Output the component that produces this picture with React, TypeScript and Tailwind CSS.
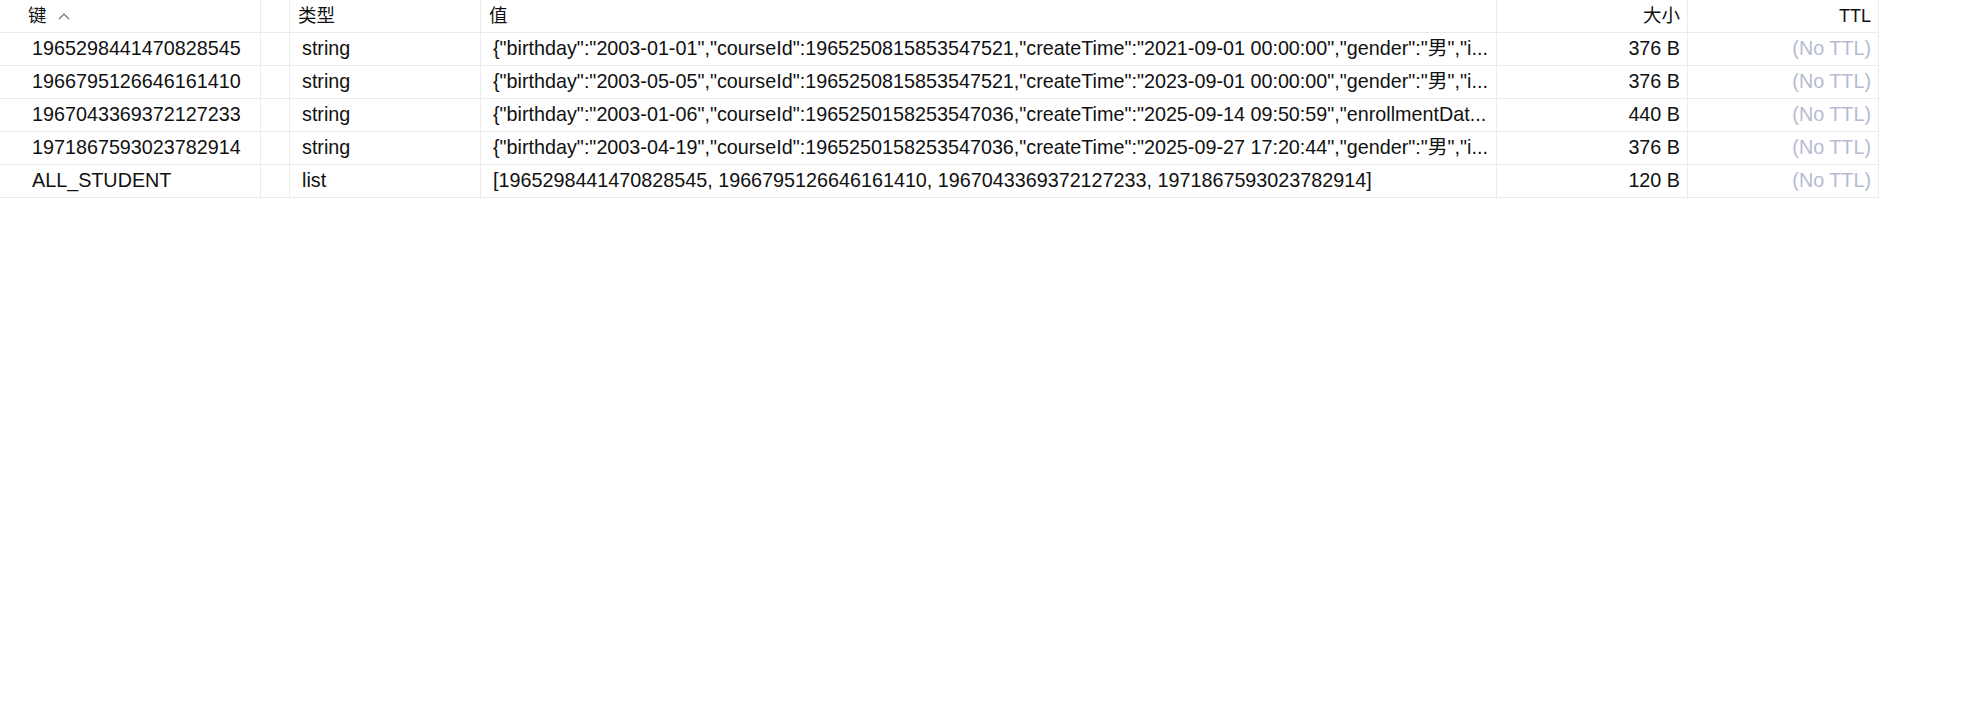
import React from "react";

type Row = { key: string; type: string; value: string; size: string };

const ROWS: Row[] = [
  {
    key: "1965298441470828545",
    type: "string",
    value:
      '{"birthday":"2003-01-01","courseId":1965250815853547521,"createTime":"2021-09-01 00:00:00","gender":"男","i...',
    size: "376 B",
  },
  {
    key: "1966795126646161410",
    type: "string",
    value:
      '{"birthday":"2003-05-05","courseId":1965250815853547521,"createTime":"2023-09-01 00:00:00","gender":"男","i...',
    size: "376 B",
  },
  {
    key: "1967043369372127233",
    type: "string",
    value:
      '{"birthday":"2003-01-06","courseId":1965250158253547036,"createTime":"2025-09-14 09:50:59","enrollmentDat...',
    size: "440 B",
  },
  {
    key: "1971867593023782914",
    type: "string",
    value:
      '{"birthday":"2003-04-19","courseId":1965250158253547036,"createTime":"2025-09-27 17:20:44","gender":"男","i...',
    size: "376 B",
  },
  {
    key: "ALL_STUDENT",
    type: "list",
    value: "[1965298441470828545, 1966795126646161410, 1967043369372127233, 1971867593023782914]",
    size: "120 B",
  },
];

const GRID = "grid grid-cols-[261px_29px_191px_1016px_191px_191px] w-[1879px]";
const CELL = "h-[33px] border-r border-b border-[#ebebeb] flex items-center overflow-hidden whitespace-nowrap";

function SortUp() {
  return (
    <svg width="12" height="7" viewBox="0 0 12 7" className="ml-[11px]">
      <path d="M1 6 L6 1 L11 6" fill="none" stroke="#6b6b6b" strokeWidth="1.1" />
    </svg>
  );
}

export default function App() {
  return (
    <div
      className="w-[1968px] h-[722px] bg-white text-[#111] text-[19.75px]"
      style={{ fontFamily: '"Liberation Sans", "Noto Sans CJK SC", sans-serif' }}
    >
      <div className={GRID}>
        <div className={`${CELL} pl-[28px]`}>
          <span className="text-[18.5px]">键</span>
          <SortUp />
        </div>
        <div className={CELL} />
        <div className={`${CELL} pl-[8px] text-[18.5px]`}>类型</div>
        <div className={`${CELL} pl-[8px] text-[18.5px]`}>值</div>
        <div className={`${CELL} justify-end pr-[7px] text-[18.5px]`}>大小</div>
        <div className={`${CELL} justify-end pr-[7px] text-[18px]`}>TTL</div>

        {ROWS.map((r) => (
          <React.Fragment key={r.key}>
            <div className={`${CELL} pl-[32px]`}>{r.key}</div>
            <div className={CELL} />
            <div className={`${CELL} pl-[12px]`}>{r.type}</div>
            <div className={`${CELL} pl-[12px] pr-[8px]`}>
              <span className="truncate">{r.value}</span>
            </div>
            <div className={`${CELL} justify-end pr-[7px]`}>{r.size}</div>
            <div className={`${CELL} justify-end pr-[7px] text-[#b6bbd1]`}>(No TTL)</div>
          </React.Fragment>
        ))}
      </div>
    </div>
  );
}
